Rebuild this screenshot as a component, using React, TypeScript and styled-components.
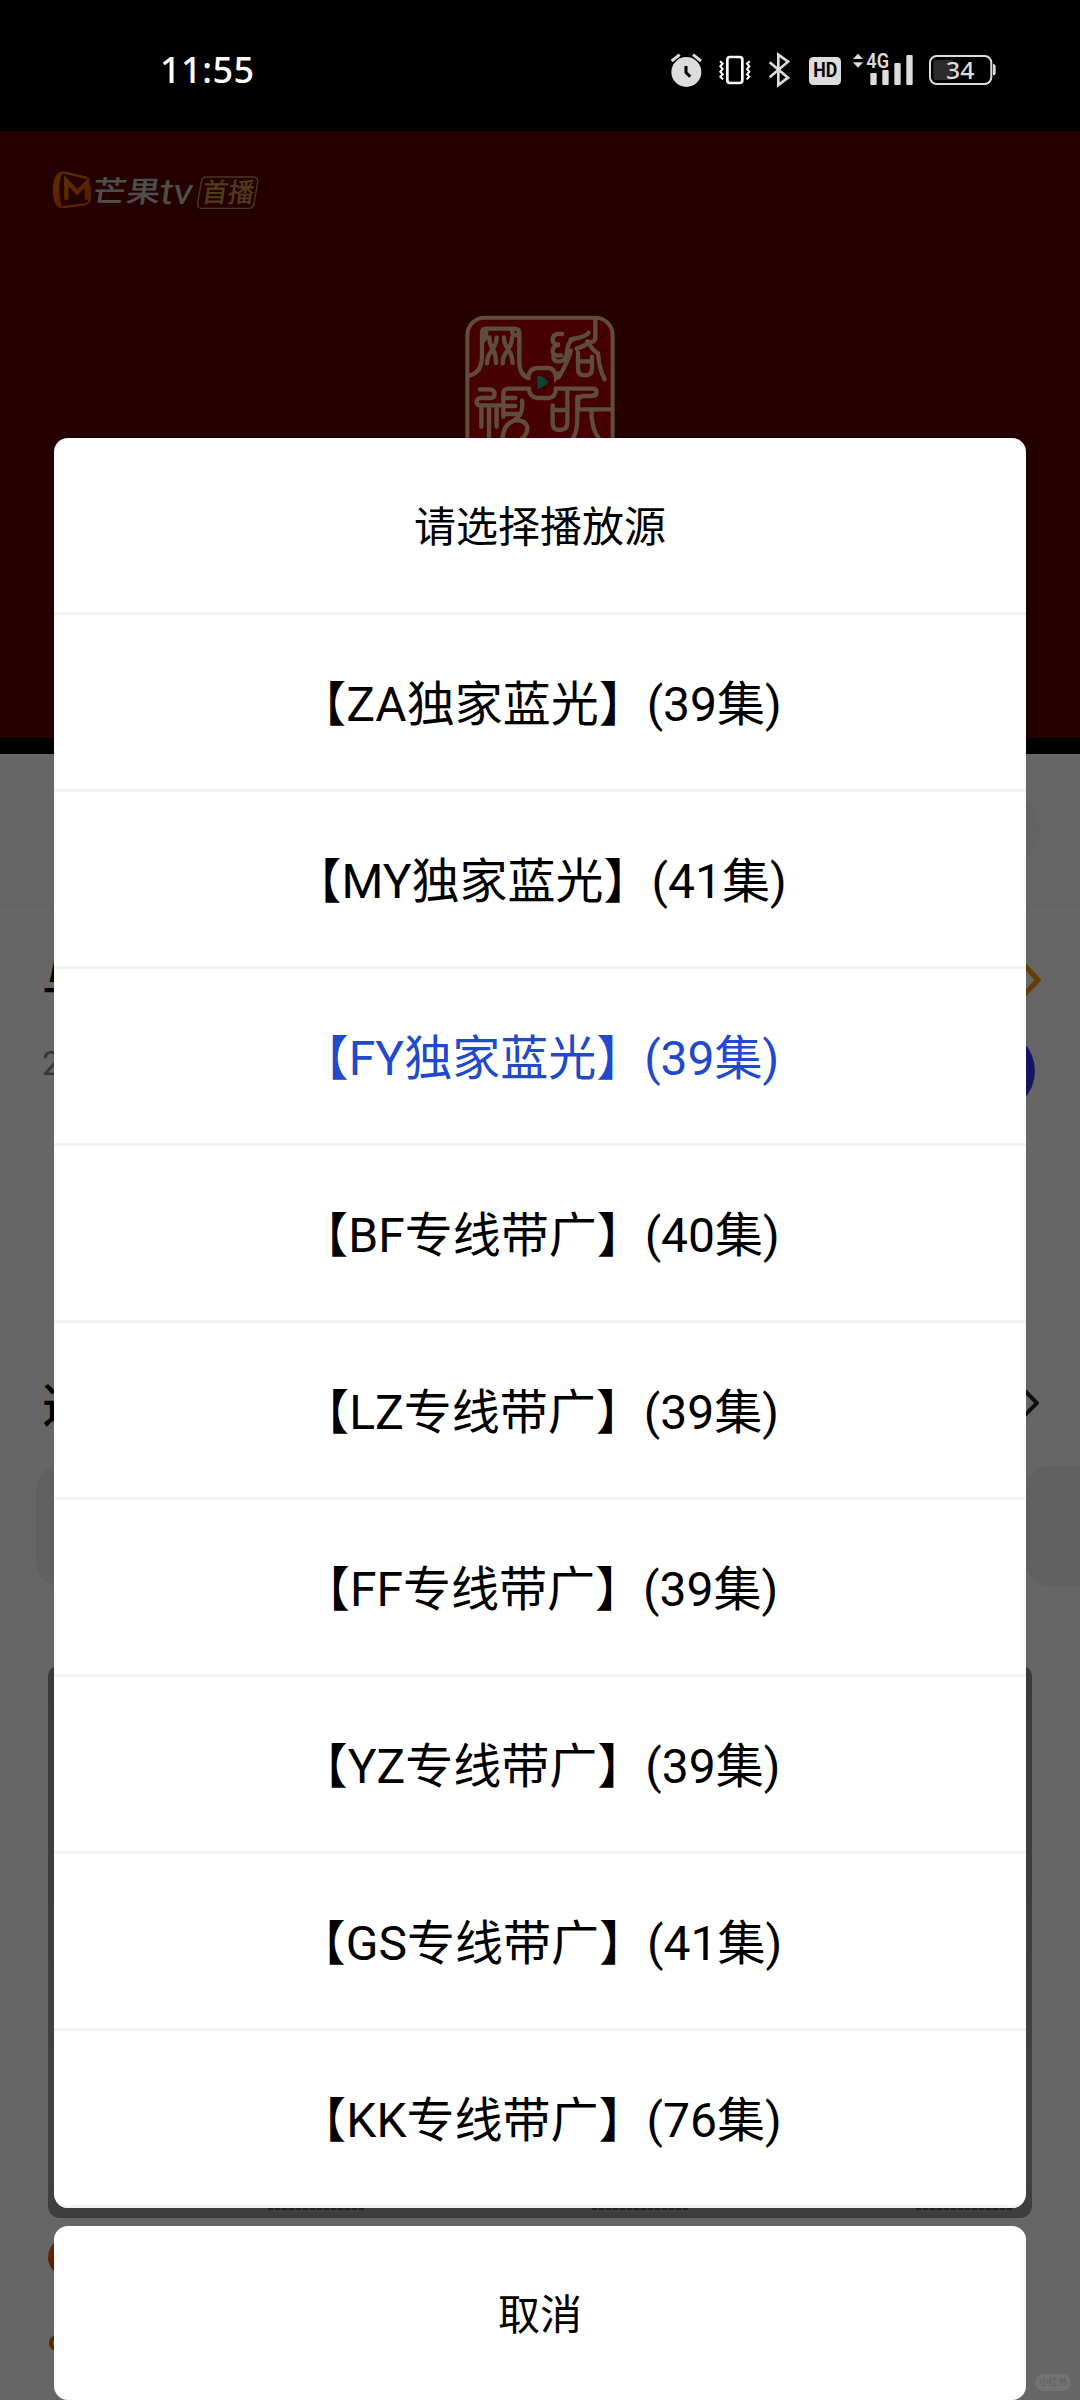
import * as React from 'react';

import styled, { createGlobalStyle } from 'styled-components';

const { useState } = React;

const GlobalStyle = createGlobalStyle`
  body {
    margin: 0;
    background: #ffffff;
  }

  * {
    box-sizing: border-box;
  }
`;

const Screen = styled.div`
  position: relative;
  display: flex;
  flex-direction: column;
  width: 1080px;
  height: 2400px;
  overflow: hidden;
  background: #ffffff;
  font-family: Roboto, 'Noto Sans CJK SC', sans-serif;
`;

const StatusBar = styled.header`
  display: flex;
  flex: none;
  align-items: center;
  justify-content: space-between;
  height: 131px;
  padding: 8px 84px 0 160px;
  background: #000000;
`;

const Clock = styled.span`
  font-family: 'Noto Sans', sans-serif;
  font-size: 36px;
  font-weight: 500;
  line-height: 34px;
  letter-spacing: 0.5px;
  color: #ffffff;
`;

const StatusIcons = styled.div`
  display: flex;
  align-items: center;
`;

const StatusIcon = styled.svg<{ $gap?: number }>`
  display: block;
  height: 34px;
  margin-left: ${({ $gap }) => $gap || 0}px;
  overflow: visible;
`;

const Video = styled.section`
  display: flex;
  flex: none;
  flex-direction: column;
  height: 623px;
  padding: 38px 0 0 52px;
  border-bottom: 16px solid #000000;
  background: #5a0000;
`;

const ChannelLogo = styled.svg`
  flex: none;
  width: 210px;
  height: 42px;
  overflow: visible;
`;

const Seal = styled.svg`
  flex: none;
  align-self: center;
  width: 152px;
  height: 152px;
  margin: 103px 52px 0 0;
`;

const Tabs = styled.div`
  display: flex;
  flex: none;
  align-items: center;
  justify-content: flex-end;
  height: 151px;
  padding-right: 40px;
  border-bottom: 1px solid #f4f4f4;
`;

const DanmuButton = styled.div`
  width: 190px;
  height: 74px;
  border-radius: 37px;
  background: #f8f8f8;
`;

const InfoRow = styled.div<{ $height: number; $right: number }>`
  display: flex;
  flex: none;
  align-items: center;
  justify-content: space-between;
  height: ${({ $height }) => $height}px;
  padding: 0 ${({ $right }) => $right}px 0 42px;
`;

const Title = styled.h1`
  margin: 6px 0 0;
  font-size: 47px;
  font-weight: 500;
  line-height: 60px;
  color: #000000;
`;

const Meta = styled.span`
  margin-bottom: 17px;
  font-size: 34px;
  color: #8a8a8a;
`;

const RoundButton = styled.div`
  flex: none;
  width: 84px;
  height: 84px;
  border-radius: 50%;
  background: #3838f0;
`;

const Actions = styled.div`
  flex: none;
  height: 252px;
`;

const Chevron = styled.svg`
  display: block;
  width: 18px;
  height: 36px;
`;

const Episodes = styled.div`
  display: flex;
  flex: none;
  gap: 26px;
  margin: 0 0 79px 36px;
`;

const Episode = styled.div`
  flex: none;
  width: 304px;
  height: 120px;
  border-radius: 24px;
  background: #f1f1f1;
`;

const Banner = styled.div`
  display: flex;
  flex: none;
  align-items: flex-end;
  justify-content: space-between;
  height: 553px;
  margin: 0 48px;
  padding: 0 20px 8px 220px;
  border-radius: 12px;
  background: linear-gradient(#91918e, #a2a4a6 90%, #98999c);
`;

const BannerNote = styled.div`
  width: 96px;
  height: 6px;
  background: repeating-linear-gradient(90deg, #50555a 0 5px, #85888c 5px 7px);
`;

const Comments = styled.div`
  display: flex;
  flex-direction: column;
  gap: 59px;
  padding: 20px 48px 0;
`;

const Badge = styled.div`
  width: 38px;
  height: 38px;
  border-radius: 50%;
  background: linear-gradient(#ff6a00, #e03a00);
`;

const Ring = styled.div`
  width: 16px;
  height: 16px;
  margin: 0 0 0 1px;
  border: 4px solid #e85a00;
  border-radius: 50%;
`;

const Overlay = styled.div`
  position: absolute;
  inset: 131px 0 0;
  display: flex;
  flex-direction: column;
  justify-content: flex-end;
  gap: 18px;
  padding: 0 54px;
  background: rgba(0, 0, 0, 0.6);
`;

const Sheet = styled.div`
  flex: none;
  overflow: hidden;
  border-radius: 14px;
  background: #ffffff;
`;

const SheetTitle = styled.div`
  height: 177px;
  padding-top: 6px;
  border-bottom: 3px solid #f2f2f2;
  font-size: 42px;
  line-height: 168px;
  text-align: center;
  color: #000000;
`;

const SourceItem = styled.button<{ $active: boolean }>`
  display: block;
  width: 100%;
  height: 177px;
  padding: 5px 0 0;
  border: 0;
  border-bottom: 3px solid #f2f2f2;
  background: none;
  font-family: inherit;
  font-size: 48px;
  line-height: 168px;
  text-align: center;
  white-space: nowrap;
  color: ${({ $active }) => ($active ? '#2049cc' : '#000000')};
`;

const CancelButton = styled.button`
  flex: none;
  height: 174px;
  padding: 6px 0 0;
  border: 0;
  border-radius: 14px;
  background: #ffffff;
  font-family: inherit;
  font-size: 42px;
  line-height: 168px;
  color: #000000;
`;

const Watermark = styled.span`
  position: absolute;
  right: 9px;
  bottom: 9px;
  width: 36px;
  height: 17px;
  border-radius: 9px;
  background: #737373;
  font-size: 9px;
  line-height: 17px;
  text-align: center;
  color: #5c5c5c;
`;

const sources = [
  { name: 'ZA独家蓝光', count: 39 },
  { name: 'MY独家蓝光', count: 41 },
  { name: 'FY独家蓝光', count: 39 },
  { name: 'BF专线带广', count: 40 },
  { name: 'LZ专线带广', count: 39 },
  { name: 'FF专线带广', count: 39 },
  { name: 'YZ专线带广', count: 39 },
  { name: 'GS专线带广', count: 41 },
  { name: 'KK专线带广', count: 76 },
];

const StatusIconList: React.FC = () => (
  <StatusIcons>
    <StatusIcon width="31" viewBox="92 66 93 102" fill="#dcdcdc">
      <circle cx="138" cy="123" r="45" />
      <path d="M94 90l24-19M182 90l-24-19" stroke="#dcdcdc" strokeWidth="9" />
      <path d="M137 105v20l13 12" fill="none" stroke="#000" strokeWidth="9" />
    </StatusIcon>
    <StatusIcon $gap={17} width="32" viewBox="236 66 96 102" fill="none" stroke="#fff">
      <rect x="261" y="78" width="45" height="78" rx="8" strokeWidth="8" />
      <path
        d="M239 91l8 7-7 8 7 8-7 8 7 8-7 7 8 8M328 91l-8 7 7 8-7 8 7 8-7 8 7 7-8 8"
        strokeWidth="6"
      />
    </StatusIcon>
    <StatusIcon $gap={18} width="21" viewBox="387 66 63 102" fill="none" stroke="#dcdcdc">
      <path d="M389 94l55 46-29 22V71l29 21-55 47" strokeWidth="8" />
    </StatusIcon>
    <StatusIcon $gap={19} width="32" viewBox="507 66 96 102">
      <rect x="507" y="78" width="96" height="84" rx="13" fill="#dcdcdc" />
      <text
        x="520"
        y="139"
        fontSize="60"
        fontWeight="700"
        textLength="72"
        lengthAdjust="spacingAndGlyphs"
      >
        HD
      </text>
    </StatusIcon>
    <StatusIcon $gap={12} width="60" viewBox="640 66 180 102" fill="#dcdcdc">
      <path d="M640 84l15-16 15 16zM640 94l15 16 15-16z" />
      <text
        x="680"
        y="111"
        fontSize="60"
        fontWeight="600"
        textLength="68"
        lengthAdjust="spacingAndGlyphs"
      >
        4G
      </text>
      <rect x="692" y="126" width="19" height="36" rx="3" />
      <rect x="728" y="117" width="19" height="45" rx="3" />
      <rect x="764" y="96" width="19" height="66" rx="3" />
      <rect x="800" y="72" width="19" height="90" rx="3" />
    </StatusIcon>
    <StatusIcon $gap={16} width="67" viewBox="867 66 201 102">
      <rect x="880" y="87" width="60" height="60" rx="8" fill="#2c2c2c" />
      <rect
        x="870"
        y="75"
        width="184"
        height="84"
        rx="20"
        fill="none"
        stroke="#dcdcdc"
        strokeWidth="6"
      />
      <path d="M1059 99q8 0 8 8v18q0 8-8 8z" fill="#dcdcdc" />
      <text
        x="918"
        y="144"
        fontFamily="Noto Sans"
        fontSize="71"
        fontWeight="500"
        textLength="85"
        lengthAdjust="spacingAndGlyphs"
        fill="#dcdcdc"
      >
        34
      </text>
    </StatusIcon>
  </StatusIcons>
);

const MangoLogo: React.FC = () => (
  <ChannelLogo viewBox="66 147 630 126">
    <defs>
      <linearGradient id="mango" x1="0" y1="0" x2="1" y2="1">
        <stop offset="0" stopColor="#e87800" />
        <stop offset="1" stopColor="#d84a00" />
      </linearGradient>
    </defs>
    <path
      d="M172 174l-68-16q-14-2-20 6-12 17-12 45 0 32 12 46 6 8 18 6l62-8q13-2 15-14 2-24-1-44"
      fill="none"
      stroke="url(#mango)"
      strokeWidth="7"
    />
    <path
      d="M101 156q-20-2-27 20-6 33 1 70 7 20 27 18-13-12-14-54 0-41 13-54z"
      fill="url(#mango)"
    />
    <path
      d="M109 239v-57l33 35 29-29v51"
      fill="none"
      stroke="url(#mango)"
      strokeWidth="13"
    />
    <g fill="#c4c4c4" transform="translate(184 246) skewX(-8)">
      <text fontSize="88" fontWeight="500" textLength="204" lengthAdjust="spacingAndGlyphs">
        芒果
      </text>
      <text
        x="202"
        y="5"
        fontSize="108"
        fontWeight="400"
        textLength="100"
        lengthAdjust="spacingAndGlyphs"
      >
        tv
      </text>
    </g>
    <path
      d="M530 171h140q15 0 13 14l-11 66q-2 14-16 14H515q-14 0-12-14l11-66q2-14 16-14z"
      fill="none"
      stroke="#b88a58"
      strokeWidth="4"
    />
    <text
      transform="translate(513 247) skewX(-8)"
      fontSize="80"
      fontWeight="500"
      textLength="156"
      lengthAdjust="spacingAndGlyphs"
      fill="#c8924c"
    >
      首播
    </text>
  </ChannelLogo>
);

const SealStamp: React.FC = () => (
  <Seal viewBox="72 42 456 456">
    <rect
      x="82"
      y="53"
      width="436"
      height="436"
      rx="52"
      fill="#b00004"
      stroke="#f0be94"
      strokeWidth="12"
    />
    <g fill="none" stroke="#f0be94" strokeWidth="13" strokeLinecap="round">
      {/* 网 */}
      <path d="M86 227q40-8 40-60V98q0-12 14-12h84q14 0 14 12v86q0 42 28 50" />
      <path d="M138 90q2 24-6 30M148 112q0 20 10 35t10 42M170 112q0 20-15 40-14 18-14 38M192 112q0 20 12 35t14 42M216 112q0 20-14 40-14 18-14 38M216 90q0 20 20 14" />
      {/* 络 */}
      <path d="M366 102q-28-4-28 18 0 14 22 14-22 2-22 20 0 16 26 12M340 170q0 16 20 14 18-2 20-22 2-36 20-46" />
      <path d="M466 56v60q-4 12-18 10-14 12-38 20M392 118q46-6 54-20M356 232q30-50 36-80M442 124q20 32 32 36 4 48 20 78M414 158v48q0 20 20 20 22 0 22-20v-36M416 184h38" />
      {/* play frame */}
      <path d="M264 234q4-28 26-30h36q20 2 22 30 4-4 8-14M190 350v-68q0-16 16-16h60q4 26 26 28h34q20-2 22-28h108q14 0 14 10 0 12-14 12h-24q-18 0-18 18v24" />
      {/* 视 */}
      <path d="M120 268h30q14 2 14 14 0 12-14 12h-30q-10 2-10 12 0 10 12 10h66M124 320v60M147 320v100M170 320v60" />
      <path d="M192 294h34M192 318h34M192 342h40M246 302q6 44-24 58 34 0 40 20 2 24-20 38M222 362q-30 10-34 50" />
      {/* 听 */}
      <path d="M338 316v54q0 20 20 20 24 0 24-20V270M340 330h40M412 290v66q0 40-14 60M414 328h104M454 330q0 56 22 84" />
    </g>
    <path d="M292 228q12-4 34 18-22 22-34 20z" fill="#20b078" />
  </Seal>
);

const App: React.FC = () => {
  const [active, setActive] = useState<number>(2);

  return (
    <Screen>
      <GlobalStyle />
      <StatusBar>
        <Clock>11:55</Clock>
        <StatusIconList />
      </StatusBar>
      <Video>
        <MangoLogo />
        <SealStamp />
      </Video>
      <Tabs>
        <DanmuButton />
      </Tabs>
      <InfoRow $height={150} $right={39}>
        <Title>与凤行</Title>
        <Chevron viewBox="0 0 18 36" fill="none" stroke="#ff9800" strokeWidth="5">
          <path d="M1 3l14 15L1 33" />
        </Chevron>
      </InfoRow>
      <InfoRow $height={32} $right={45}>
        <Meta>2024</Meta>
        <RoundButton />
      </InfoRow>
      <Actions />
      <InfoRow $height={127} $right={41}>
        <Title>选集</Title>
        <Chevron viewBox="0 0 18 36" fill="none" stroke="#2a2a2a" strokeWidth="4">
          <path d="M2 4l14 14L2 32" />
        </Chevron>
      </InfoRow>
      <Episodes>
        <Episode />
        <Episode />
        <Episode />
        <Episode />
      </Episodes>
      <Banner>
        <BannerNote />
        <BannerNote />
        <BannerNote />
      </Banner>
      <Comments>
        <Badge />
        <Ring />
      </Comments>
      <Overlay>
        <Sheet>
          <SheetTitle>请选择播放源</SheetTitle>
          {sources.map(({ name, count }, index) => (
            <SourceItem key={name} $active={index === active} onClick={() => setActive(index)}>
              【{name}】({count}集)
            </SourceItem>
          ))}
        </Sheet>
        <CancelButton>取消</CancelButton>
      </Overlay>
      <Watermark>小红书</Watermark>
    </Screen>
  );
};

export default App;
